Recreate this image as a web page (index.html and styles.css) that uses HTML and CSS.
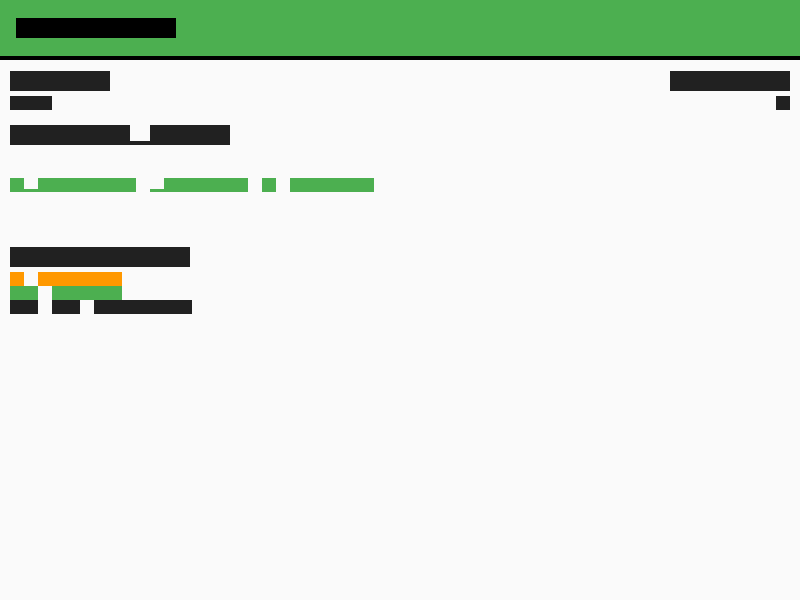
FILE: index.html
```html
<!DOCTYPE html>
<html lang="en">
<head>
<meta charset="utf-8">
<title>Overview</title>
<link rel="stylesheet" href="styles.css">
</head>
<body>
<header class="topbar">
  <h1 class="line s20 title"><span class="b">Overview</span></h1>
</header>
<main class="content">
  <section class="user-row">
    <div class="user">
      <div class="line s20 ink"><span class="b">Hello</span></div>
      <div class="line s14 ink gap5"><span class="b">Sam</span></div>
    </div>
    <div class="status">
      <div class="line s20 ink"><span class="b">Online</span></div>
      <div class="line s14 ink gap5"><span class="b">3</span></div>
    </div>
  </section>
  <div class="line s20 ink device"><span class="b">Deskto</span><span class="d">p</span><span class="b">Sync</span></div>
  <nav class="line s14 green links"><a class="lnk" href="#"><span class="b">U</span><span class="d">p</span><span class="b">grading</span></a> <a class="lnk" href="#"><span class="d">p</span><span class="b">ricing</span></a> <span class="b">&amp;</span> <a class="lnk" href="#"><span class="b">Offers</span></a></nav>
  <h2 class="line s20 ink heading"><span class="b">Inventory</span></h2>
  <ul class="stats">
    <li class="line s14 orange"><span class="b">!</span> <span class="b">Urgent</span></li>
    <li class="line s14 green"><span class="b">OK</span> <span class="b">Ready</span></li>
    <li class="line s14 ink"><span class="b">On</span> <span class="b">12</span> <span class="b">January</span></li>
  </ul>
</main>
</body>
</html>
```
FILE: styles.css
```css
html, body {
  margin: 0;
  padding: 0;
}

body {
  background: #fafafa;
  font-family: "Liberation Mono", "DejaVu Sans Mono", monospace;
}

/* block-glyph text lines: every character takes a 1em square */
.line {
  margin: 0;
  font-weight: normal;
  line-height: 1;
  letter-spacing: calc(1em - 1ch);
  white-space: nowrap;
}

.s20 { font-size: 20px; }
.s14 { font-size: 14px; }

.ink { --ink: #212121; }
.green { --ink: #4caf50; }
.orange { --ink: #ff9800; }
.title { --ink: #000000; }

/* glyph run: text drawn a bit smaller inside, each cell still one outer em */
.b,
.d {
  display: inline-block;
  vertical-align: top;
  font-size: 0.85em;
  letter-spacing: calc(1em / 0.85 - 1ch);
  height: calc(1em / 0.85);
  line-height: calc(1em / 0.85);
  color: transparent;
}

.b {
  background: var(--ink);
}

.d {
  background: linear-gradient(to bottom, transparent 80%, var(--ink) 80%);
}

.lnk {
  text-decoration: none;
  color: transparent;
}

/* header */
.topbar {
  background: #4caf50;
  border-bottom: 4px solid #000;
  padding: 18px 16px;
}

/* content */
.content {
  padding: 11px 10px;
}

.user-row {
  display: flex;
  justify-content: space-between;
}

.status {
  text-align: right;
}

.gap5 {
  margin-top: 5px;
}

.device {
  margin-top: 15px;
}

.links {
  margin-top: 33px;
}

.heading {
  margin-top: 55px;
}

.stats {
  list-style: none;
  margin: 5px 0 0;
  padding: 0;
}
```
